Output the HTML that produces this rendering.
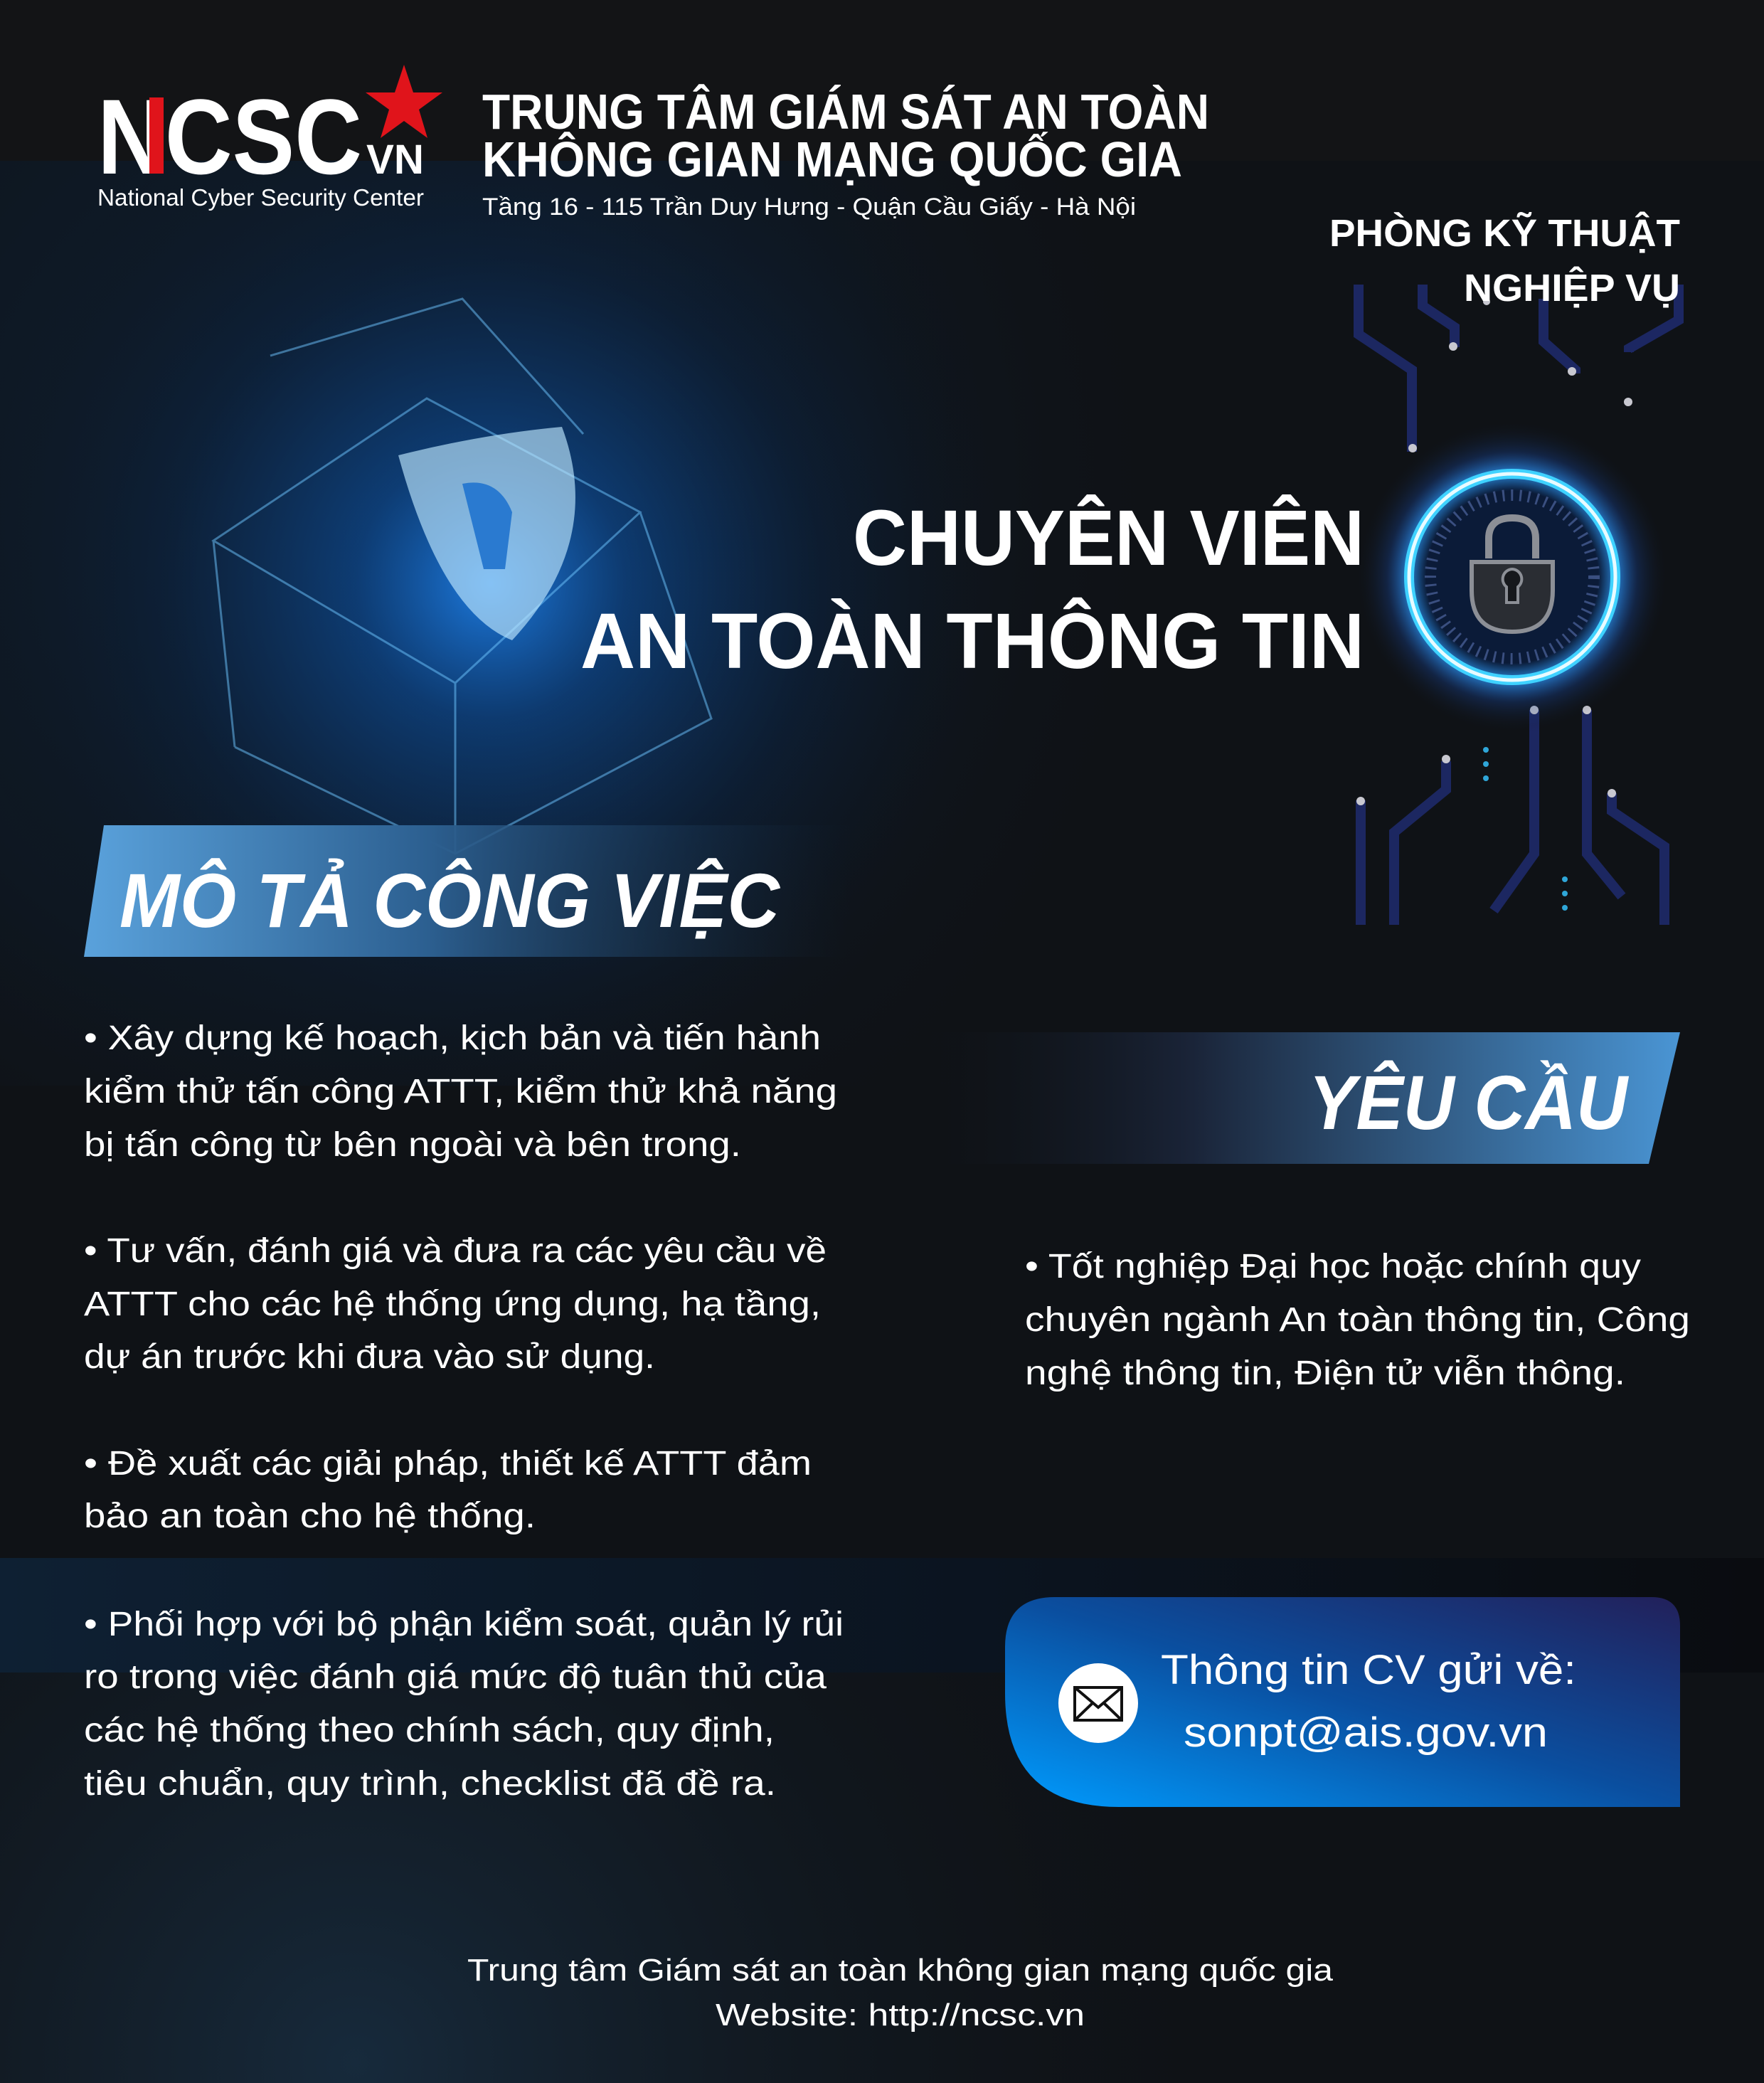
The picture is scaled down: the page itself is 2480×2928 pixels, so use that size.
<!DOCTYPE html>
<html><head><meta charset="utf-8"><style>
html,body{margin:0;padding:0;background:#0f1216;}
svg{display:block}
text{font-family:"Liberation Sans","DejaVu Sans",sans-serif;fill:#fff}
</style></head><body>
<svg width="2480" height="2928" viewBox="0 0 2480 2928" xmlns="http://www.w3.org/2000/svg">
<defs>
<radialGradient id="glow" cx="690" cy="820" r="760" gradientUnits="userSpaceOnUse">
<stop offset="0" stop-color="#1f8bff" stop-opacity="0.85"/>
<stop offset="0.25" stop-color="#0d4f9e" stop-opacity="0.6"/>
<stop offset="0.6" stop-color="#0b2444" stop-opacity="0.45"/>
<stop offset="1" stop-color="#0f1216" stop-opacity="0"/>
</radialGradient>
<radialGradient id="imgfade" cx="500" cy="700" r="1200" gradientUnits="userSpaceOnUse">
<stop offset="0" stop-color="#0e2238" stop-opacity="0.9"/>
<stop offset="0.6" stop-color="#0e1a28" stop-opacity="0.6"/>
<stop offset="1" stop-color="#0f1216" stop-opacity="0"/>
</radialGradient>
<linearGradient id="mo" x1="0" y1="0" x2="1" y2="0">
<stop offset="0" stop-color="#5aa2dc"/>
<stop offset="0.45" stop-color="#2c5f90"/>
<stop offset="1" stop-color="#14263a" stop-opacity="0"/>
</linearGradient>
<linearGradient id="yc" x1="0" y1="0" x2="1" y2="0">
<stop offset="0" stop-color="#10151c" stop-opacity="0"/>
<stop offset="0.35" stop-color="#1a2438"/>
<stop offset="1" stop-color="#4a95d4"/>
</linearGradient>
<linearGradient id="cv" x1="0" y1="1" x2="1" y2="0">
<stop offset="0" stop-color="#009cff"/>
<stop offset="0.5" stop-color="#0a4fa0"/>
<stop offset="1" stop-color="#22205a"/>
</linearGradient>
<linearGradient id="band" x1="0" y1="0" x2="1" y2="0">
<stop offset="0" stop-color="#0e2033"/>
<stop offset="0.55" stop-color="#0b1420"/>
<stop offset="1" stop-color="#0a0c10"/>
</linearGradient>
<radialGradient id="ringglow" cx="2126" cy="811" r="220" gradientUnits="userSpaceOnUse">
<stop offset="0.55" stop-color="#0a1d40" stop-opacity="0.8"/>
<stop offset="0.66" stop-color="#2d9cff" stop-opacity="0.8"/>
<stop offset="0.8" stop-color="#1b4fb0" stop-opacity="0.3"/>
<stop offset="1" stop-color="#0f1216" stop-opacity="0"/>
</radialGradient>
<radialGradient id="lowglow" cx="500" cy="2900" r="1300" gradientUnits="userSpaceOnUse">
<stop offset="0" stop-color="#1c3a55" stop-opacity="0.6"/>
<stop offset="1" stop-color="#0f1216" stop-opacity="0"/>
</radialGradient>
</defs>
<rect width="2480" height="2928" fill="#0f1216"/>
<rect x="0" y="226" width="2480" height="1300" fill="url(#imgfade)"/>
<rect x="0" y="226" width="1600" height="1300" fill="url(#glow)"/>
<rect x="0" y="0" width="2480" height="226" fill="#131416"/>
<!-- cube/shield -->
<g stroke="#6fc6ff" stroke-width="3" fill="none" opacity="0.5">
<path d="M300 760 L600 560 L900 720 L640 960 Z"/>
<path d="M330 1050 L640 1200 L1000 1010 L900 720"/>
<path d="M300 760 L330 1050 M640 960 L640 1200"/>
<path d="M380 500 L650 420 L820 610"/>
</g>
<path d="M560 640 Q680 610 790 600 Q850 760 720 900 Q620 860 560 640 Z" fill="#bfe8ff" opacity="0.65"/>
<path d="M650 680 Q700 670 720 720 L710 800 L680 800 Z" fill="#2a7ad0"/>
<!-- circuits right -->
<g stroke="#1e2a6a" stroke-width="14" fill="none" opacity="0.9">
<path d="M1910 400 L1910 470 L1985 520 L1985 635"/>
<path d="M2000 400 L2000 430 L2045 460 L2045 488"/>
<path d="M2170 420 L2170 480 L2215 520 L2215 525"/>
<path d="M2360 400 L2360 450 L2290 490 L2290 495"/>
<path d="M1913 1125 L1913 1300"/>
<path d="M2033 1070 L2033 1110 L1960 1170 L1960 1300"/>
<path d="M2157 998 L2157 1200 L2100 1280"/>
<path d="M2231 998 L2231 1200 L2280 1260"/>
<path d="M2266 1115 L2266 1140 L2340 1190 L2340 1300"/>
</g>
<g fill="#c8c8d0">
<circle cx="1986" cy="630" r="6"/><circle cx="2043" cy="487" r="6"/><circle cx="2210" cy="522" r="6"/><circle cx="2289" cy="565" r="6"/><circle cx="2090" cy="424" r="5"/>
<circle cx="1913" cy="1126" r="6"/><circle cx="2033" cy="1067" r="6"/><circle cx="2157" cy="998" r="6"/><circle cx="2231" cy="998" r="6"/><circle cx="2266" cy="1115" r="6"/>
</g>
<g fill="#2fa6d8"><circle cx="2089" cy="1054" r="4"/><circle cx="2089" cy="1074" r="4"/><circle cx="2089" cy="1094" r="4"/><circle cx="2200" cy="1236" r="4"/><circle cx="2200" cy="1256" r="4"/><circle cx="2200" cy="1276" r="4"/></g>
<!-- lock ring -->
<circle cx="2126" cy="811" r="230" fill="url(#ringglow)"/>
<circle cx="2126" cy="811" r="145" fill="none" stroke="#3fd2ff" stroke-width="14"/>
<circle cx="2126" cy="811" r="145" fill="none" stroke="#e8fbff" stroke-width="5"/>
<circle cx="2126" cy="811" r="115" fill="none" stroke="#3a4f80" stroke-width="16" stroke-dasharray="3 9"/>
<path d="M2093 785 L2093 757 Q2093 728 2126 728 Q2159 728 2159 757 L2159 785" fill="none" stroke="#8c8f96" stroke-width="10"/>
<path d="M2069 790 L2183 790 L2183 830 Q2183 888 2126 888 Q2069 888 2069 830 Z" fill="#2a2d33" stroke="#8c8f96" stroke-width="6"/>
<path d="M2126 800 a14 14 0 0 1 8 25 l0 22 l-16 0 l0 -22 a14 14 0 0 1 8 -25 z" fill="#16181c" stroke="#8c8f96" stroke-width="4"/>
<!-- lower bands -->
<rect x="0" y="2190" width="2480" height="161" fill="url(#band)"/>
<rect x="0" y="2351" width="2480" height="577" fill="url(#lowglow)"/>
<!-- logo -->
<text x="137" y="244" font-size="150" font-weight="bold" textLength="372" lengthAdjust="spacingAndGlyphs">NCSC</text>
<rect x="210" y="137" width="20" height="107" fill="#e0141b"/>
<polygon points="568,91 581,130 622,130 589,154 601,194 568,170 535,194 547,154 514,130 555,130" fill="#e0141b"/>
<text x="515" y="244" font-size="58" font-weight="bold" textLength="81" lengthAdjust="spacingAndGlyphs">VN</text>
<text x="137" y="289" font-size="33" textLength="459" lengthAdjust="spacingAndGlyphs">National Cyber Security Center</text>
<!-- header -->
<text x="678" y="181" font-size="70" font-weight="bold" textLength="1022" lengthAdjust="spacingAndGlyphs">TRUNG TÂM GIÁM SÁT AN TOÀN</text>
<text x="678" y="248" font-size="70" font-weight="bold" textLength="984" lengthAdjust="spacingAndGlyphs">KHÔNG GIAN MẠNG QUỐC GIA</text>
<text x="678" y="302" font-size="34" textLength="919" lengthAdjust="spacingAndGlyphs">Tầng 16 - 115 Trần Duy Hưng - Quận Cầu Giấy - Hà Nội</text>
<text x="2362" y="346" font-size="54" font-weight="bold" text-anchor="end" textLength="493" lengthAdjust="spacingAndGlyphs">PHÒNG KỸ THUẬT</text>
<text x="2362" y="423" font-size="54" font-weight="bold" text-anchor="end" textLength="304" lengthAdjust="spacingAndGlyphs">NGHIỆP VỤ</text>
<text x="1918" y="794" font-size="110" font-weight="bold" text-anchor="end" textLength="719" lengthAdjust="spacingAndGlyphs">CHUYÊN VIÊN</text>
<text x="1918" y="939" font-size="110" font-weight="bold" text-anchor="end" textLength="1102" lengthAdjust="spacingAndGlyphs">AN TOÀN THÔNG TIN</text>
<!-- banners -->
<polygon points="146,1160 1195,1160 1195,1345 118,1345" fill="url(#mo)"/>
<text x="168" y="1303" font-size="108" font-weight="bold" font-style="italic" textLength="928" lengthAdjust="spacingAndGlyphs">MÔ TẢ CÔNG VIỆC</text>
<polygon points="1307,1451 2362,1451 2318,1636 1307,1636" fill="url(#yc)"/>
<text x="2288" y="1587" font-size="108" font-weight="bold" font-style="italic" text-anchor="end" textLength="448" lengthAdjust="spacingAndGlyphs">YÊU CẦU</text>
<!-- bullets -->
<g font-size="48">
<text x="118" y="1475" textLength="1036" lengthAdjust="spacingAndGlyphs">• Xây dựng kế hoạch, kịch bản và tiến hành</text>
<text x="118" y="1550" textLength="1059" lengthAdjust="spacingAndGlyphs">kiểm thử tấn công ATTT, kiểm thử khả năng</text>
<text x="118" y="1625" textLength="924" lengthAdjust="spacingAndGlyphs">bị tấn công từ bên ngoài và bên trong.</text>
<text x="118" y="1774" textLength="1044" lengthAdjust="spacingAndGlyphs">• Tư vấn, đánh giá và đưa ra các yêu cầu về</text>
<text x="118" y="1849" textLength="1036" lengthAdjust="spacingAndGlyphs">ATTT cho các hệ thống ứng dụng, hạ tầng,</text>
<text x="118" y="1923" textLength="803" lengthAdjust="spacingAndGlyphs">dự án trước khi đưa vào sử dụng.</text>
<text x="118" y="2073" textLength="1023" lengthAdjust="spacingAndGlyphs">• Đề xuất các giải pháp, thiết kế ATTT đảm</text>
<text x="118" y="2147" textLength="635" lengthAdjust="spacingAndGlyphs">bảo an toàn cho hệ thống.</text>
<text x="118" y="2299" textLength="1068" lengthAdjust="spacingAndGlyphs">• Phối hợp với bộ phận kiểm soát, quản lý rủi</text>
<text x="118" y="2373" textLength="1044" lengthAdjust="spacingAndGlyphs">ro trong việc đánh giá mức độ tuân thủ của</text>
<text x="118" y="2448" textLength="971" lengthAdjust="spacingAndGlyphs">các hệ thống theo chính sách, quy định,</text>
<text x="118" y="2523" textLength="973" lengthAdjust="spacingAndGlyphs">tiêu chuẩn, quy trình, checklist đã đề ra.</text>
<text x="1441" y="1796" textLength="866" lengthAdjust="spacingAndGlyphs">• Tốt nghiệp Đại học hoặc chính quy</text>
<text x="1441" y="1871" textLength="935" lengthAdjust="spacingAndGlyphs">chuyên ngành An toàn thông tin, Công</text>
<text x="1441" y="1946" textLength="844" lengthAdjust="spacingAndGlyphs">nghệ thông tin, Điện tử viễn thông.</text>
</g>
<!-- CV box -->
<path d="M1483 2245 L2322 2245 Q2362 2245 2362 2285 L2362 2540 L1573 2540 Q1413 2540 1413 2380 L1413 2315 Q1413 2245 1483 2245 Z" fill="url(#cv)"/>
<circle cx="1544" cy="2394" r="56" fill="#fff"/>
<rect x="1511" y="2372" width="66" height="46" fill="none" stroke="#111" stroke-width="4"/>
<path d="M1511 2372 L1544 2400 L1577 2372 M1511 2418 L1536 2394 M1577 2418 L1552 2394" fill="none" stroke="#111" stroke-width="4"/>
<text x="1632" y="2367" font-size="58" textLength="584" lengthAdjust="spacingAndGlyphs">Thông tin CV gửi về:</text>
<text x="1664" y="2455" font-size="58" textLength="512" lengthAdjust="spacingAndGlyphs">sonpt@ais.gov.vn</text>
<!-- footer -->
<text x="657" y="2784" font-size="44" textLength="1217" lengthAdjust="spacingAndGlyphs">Trung tâm Giám sát an toàn không gian mạng quốc gia</text>
<text x="1006" y="2847" font-size="44" textLength="519" lengthAdjust="spacingAndGlyphs">Website: http://ncsc.vn</text>
</svg>
</body></html>
